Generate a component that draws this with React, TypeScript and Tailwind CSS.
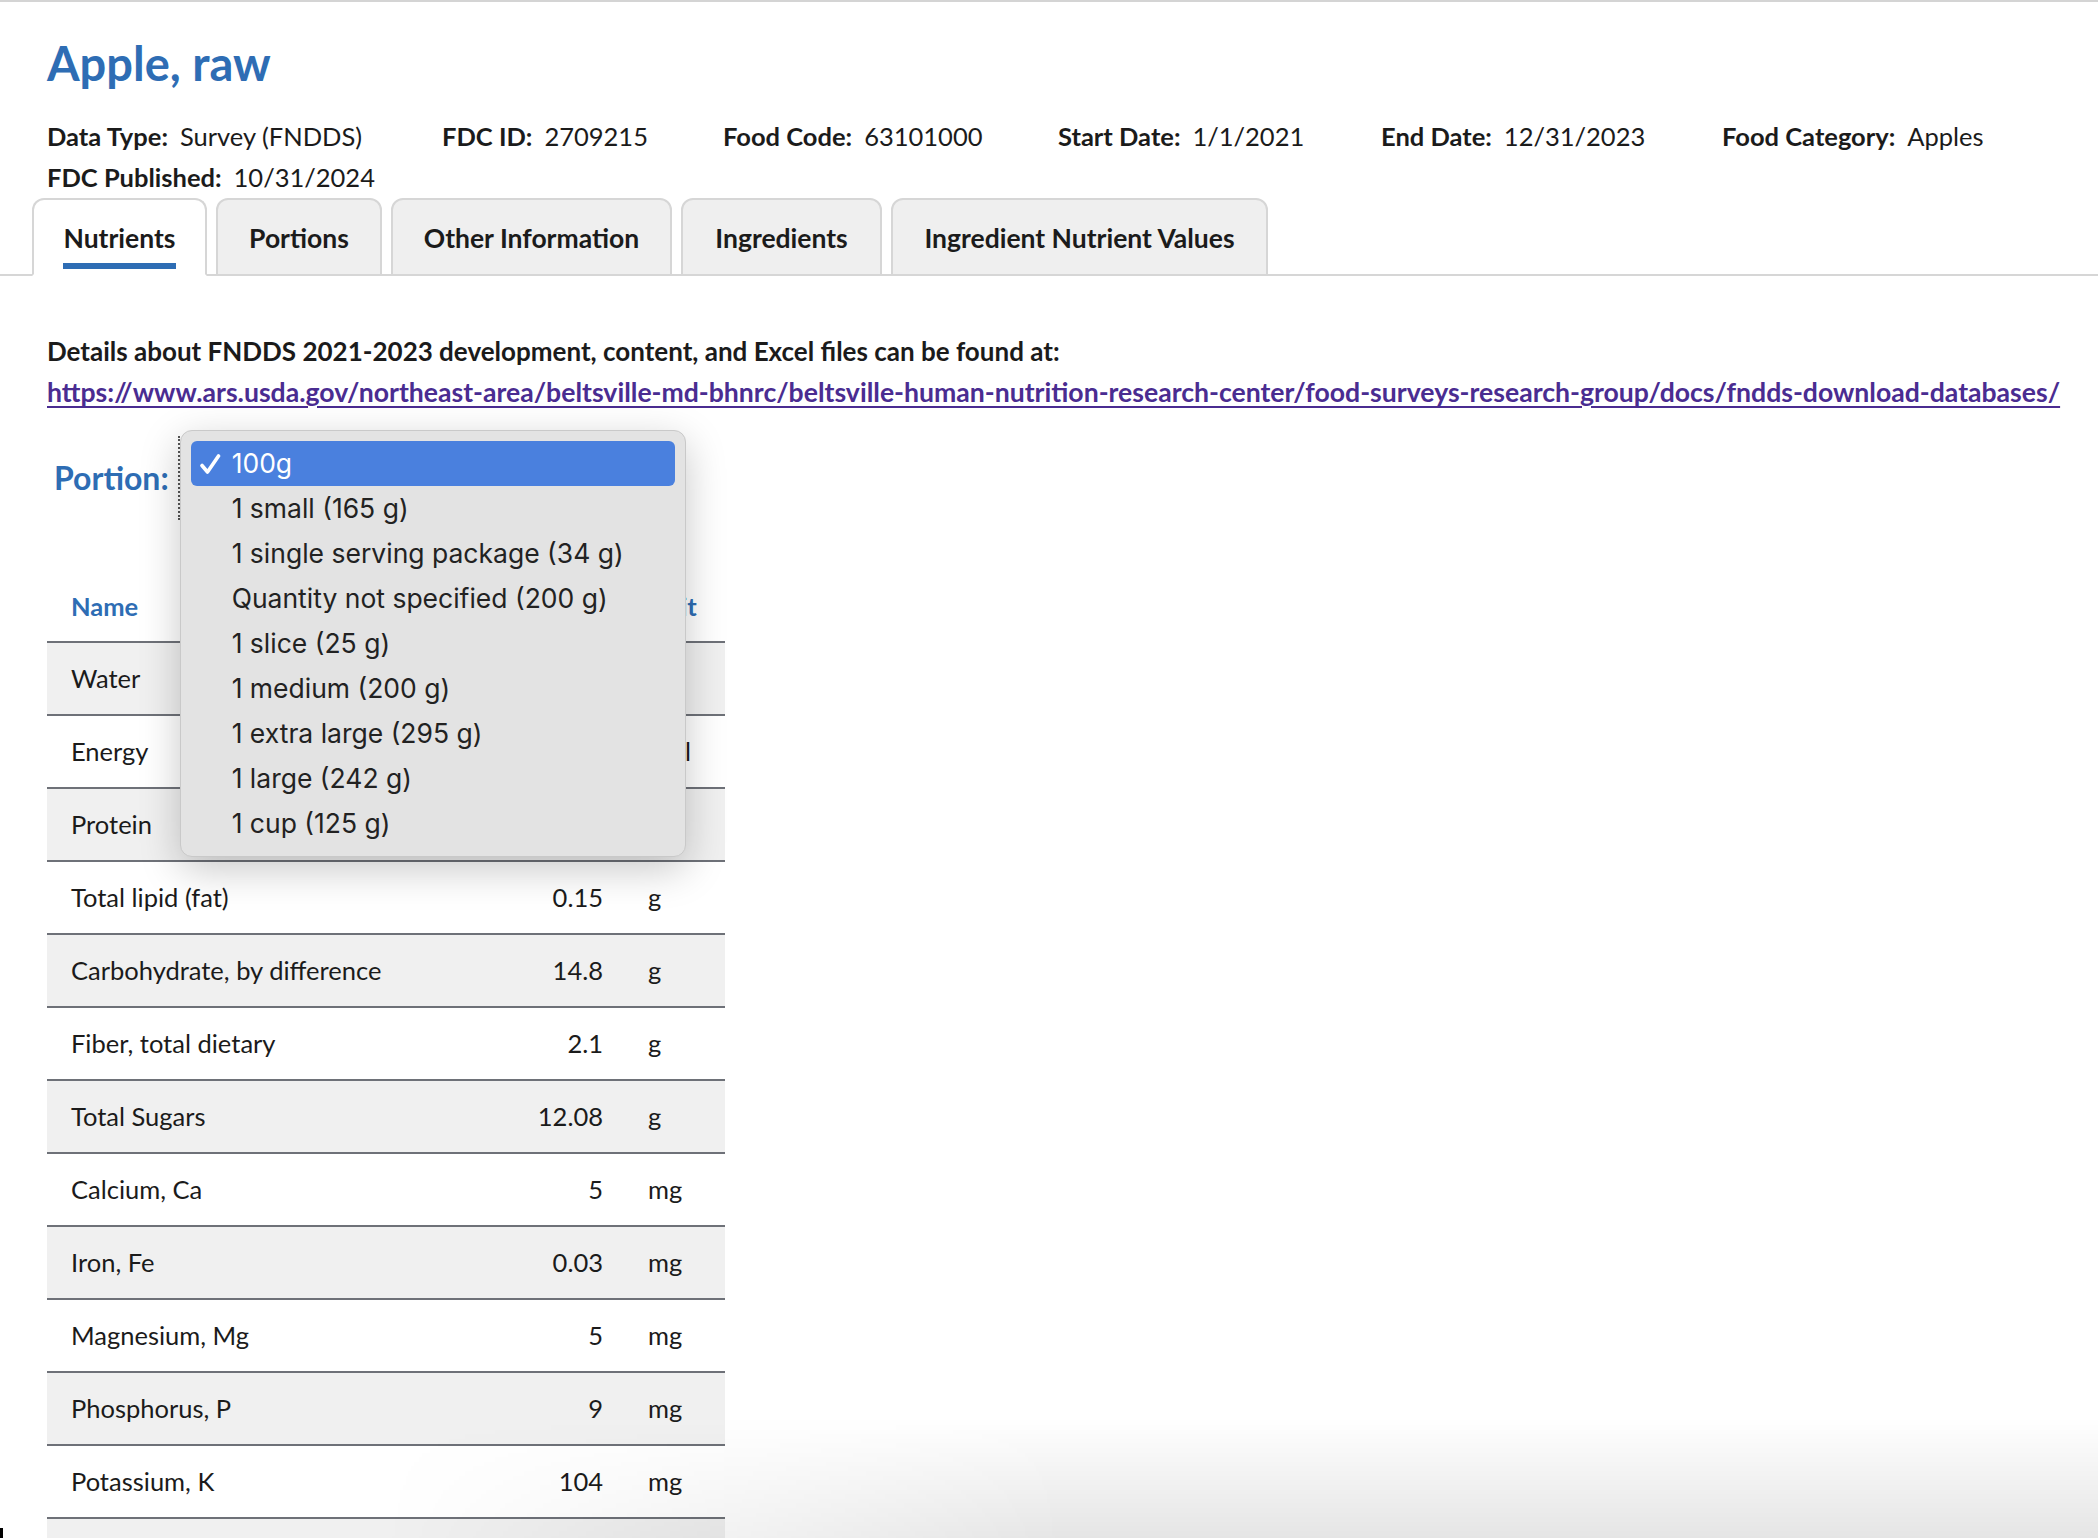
import React from 'react';

const META = [
    { label: 'Data Type:', value: 'Survey (FNDDS)', w: 'w-[395px]' },
    { label: 'FDC ID:', value: '2709215', w: 'w-[281px]' },
    { label: 'Food Code:', value: '63101000', w: 'w-[335px]' },
    { label: 'Start Date:', value: '1/1/2021', w: 'w-[323px]' },
    { label: 'End Date:', value: '12/31/2023', w: 'w-[341px]' },
    { label: 'Food Category:', value: 'Apples', w: 'w-[270px]' },
    { label: 'FDC Published:', value: '10/31/2024', w: 'w-[400px]' },
];

const TABS = [
    { name: 'Nutrients', w: 'w-[175px]' },
    { name: 'Portions', w: 'w-[166px]' },
    { name: 'Other Information', w: 'w-[281px]' },
    { name: 'Ingredients', w: 'w-[201px]' },
    { name: 'Ingredient Nutrient Values', w: 'w-[377px]' },
];

const PORTIONS = [
    '100g',
    '1 small (165 g)',
    '1 single serving package (34 g)',
    'Quantity not specified (200 g)',
    '1 slice (25 g)',
    '1 medium (200 g)',
    '1 extra large (295 g)',
    '1 large (242 g)',
    '1 cup (125 g)',
];

const NUTRIENTS = [
    { name: 'Water', amount: '85.56', unit: 'g' },
    { name: 'Energy', amount: '61', unit: 'kcal' },
    { name: 'Protein', amount: '0.17', unit: 'g' },
    { name: 'Total lipid (fat)', amount: '0.15', unit: 'g' },
    { name: 'Carbohydrate, by difference', amount: '14.8', unit: 'g' },
    { name: 'Fiber, total dietary', amount: '2.1', unit: 'g' },
    { name: 'Total Sugars', amount: '12.08', unit: 'g' },
    { name: 'Calcium, Ca', amount: '5', unit: 'mg' },
    { name: 'Iron, Fe', amount: '0.03', unit: 'mg' },
    { name: 'Magnesium, Mg', amount: '5', unit: 'mg' },
    { name: 'Phosphorus, P', amount: '9', unit: 'mg' },
    { name: 'Potassium, K', amount: '104', unit: 'mg' },
    { name: 'Sodium, Na', amount: '1', unit: 'mg' },
];

export default function App() {
    return (
        <div className="relative h-[1538px] w-full overflow-hidden bg-white font-['Lato','Open_Sans',sans-serif] text-[#1b1b1b]">
            <div className="h-[2px] w-full bg-[#d4d4d4]" />

            {/* Header */}
            <div className="px-[47px] pt-[36px]">
                <h1 className="text-[47px] font-bold leading-[50px] text-[#2e6db4]">Apple, raw</h1>
                <div className="mt-[28px] flex flex-wrap text-[25.5px] leading-[41px]">
                    {META.map(m => (
                        <div key={m.label} className={`${m.w} whitespace-nowrap`}>
                            <span className="mr-[12px] font-bold">{m.label}</span>
                            <span>{m.value}</span>
                        </div>
                    ))}
                </div>
            </div>

            {/* Tabs */}
            <div className="flex gap-[9px] border-b-2 border-[#d6d6d6] px-[32px]">
                {TABS.map((t, i) => (
                    <div
                        key={t.name}
                        className={`${t.w} -mb-[2px] flex h-[78px] items-center justify-center rounded-t-[12px] border-2 border-[#d6d6d6] text-[26.5px] font-bold ${i === 0 ? 'border-b-white bg-white' : 'bg-[#efefef]'}`}
                    >
                        <span className="relative pt-[4px]">
                            {t.name}
                            {i === 0 && <span className="absolute -bottom-[10px] left-0 right-0 h-[6px] bg-[#2e6db4]" />}
                        </span>
                    </div>
                ))}
            </div>

            {/* Details */}
            <div className="px-[47px] pt-[55px] text-[26px] font-bold leading-[41px]">
                <p>Details about FNDDS 2021-2023 development, content, and Excel files can be found at:</p>
                <a
                    href="#"
                    className="whitespace-nowrap text-[26.6px] text-[#4a2c91] underline decoration-2 underline-offset-[4px]"
                >
                    https://www.ars.usda.gov/northeast-area/beltsville-md-bhnrc/beltsville-human-nutrition-research-center/food-surveys-research-group/docs/fndds-download-databases/
                </a>
            </div>

            {/* Portion select */}
            <div className="mt-[23px] flex items-center pl-[54px]">
                <span className="mr-[9px] text-[32px] font-bold text-[#2e6db4]">Portion:</span>
                <div className="relative h-[84px] w-[300px] border-l-2 border-dotted border-[#555]">
                    <div className="absolute left-[0px] top-[-6px] z-20 w-[506px] rounded-[12px] border border-[#c9c9c9] bg-[#e3e3e3] px-[10px] py-[10px] font-['Inter','Liberation_Sans',sans-serif] text-[26.5px] text-[#222] shadow-[0_12px_40px_rgba(0,0,0,0.22)]">
                        {PORTIONS.map((p, i) => (
                            <div
                                key={p}
                                className={`flex h-[45px] items-center rounded-[6px] ${i === 0 ? 'bg-[#4a80de] text-white' : ''}`}
                            >
                                <span className="flex w-[41px] justify-center pr-[2px]">
                                    {i === 0 && (
                                        <svg width="22" height="22" viewBox="0 0 22 22" fill="none">
                                            <path d="M3 12.5 L8.5 19 L19.5 3" stroke="white" strokeWidth="3.6" strokeLinecap="round" strokeLinejoin="round" />
                                        </svg>
                                    )}
                                </span>
                                <span>{p}</span>
                            </div>
                        ))}
                    </div>
                </div>
            </div>

            {/* Nutrient table */}
            <div className="ml-[47px] mt-[51px] w-[678px] text-[25.5px]">
                <div className="flex h-[72px] items-center border-b-2 border-[#6e7178] font-bold text-[#2e6db4]">
                    <span className="flex-1 pl-[24px]">Name</span>
                    <span className="w-[140px] pr-[23px] text-right">Amount</span>
                    <span className="w-[99px] pl-[22px]">Unit</span>
                </div>
                {NUTRIENTS.map((n, i) => (
                    <div
                        key={n.name}
                        className={`flex h-[73px] items-center border-b-2 border-[#6e7178] ${i % 2 === 0 ? 'bg-[#f0f0f0]' : 'bg-white'}`}
                    >
                        <span className="flex-1 pl-[24px]">{n.name}</span>
                        <span className="w-[140px] pr-[23px] text-right">{n.amount}</span>
                        <span className="w-[99px] pl-[22px]">{n.unit}</span>
                    </div>
                ))}
            </div>

            {/* bottom window shadow */}
            <div className="pointer-events-none absolute bottom-0 left-[380px] right-0 h-[120px] bg-[linear-gradient(to_bottom,rgba(0,0,0,0),rgba(0,0,0,0.1))] [mask-image:linear-gradient(to_right,transparent,black_40%)]" />
            <div className="pointer-events-none absolute bottom-0 left-0 h-[10px] w-[3px] bg-black" />
        </div>
    );
}
